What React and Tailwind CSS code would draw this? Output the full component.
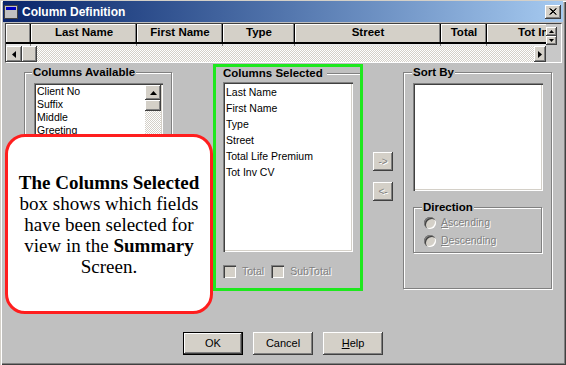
const ui = "font-['Liberation_Sans',Arial,sans-serif]";
const raised =
  "bg-[#d4d0c8] shadow-[inset_-1px_-1px_0_#404040,inset_1px_1px_0_#ffffff,inset_-2px_-2px_0_#808080]";
const sunken =
  "bg-white shadow-[inset_1px_1px_0_#808080,inset_2px_2px_0_#404040,inset_-1px_-1px_0_#ffffff,inset_-2px_-2px_0_#d4d0c8]";
const etched = "border border-[#808080] shadow-[inset_1px_1px_0_#ffffff,1px_1px_0_#ffffff]";
const disabled = "text-[#808080] [text-shadow:1px_1px_0_#ffffff]";
const dither =
  "bg-[repeating-conic-gradient(#ffffff_0_25%,#d4d0c8_0_50%)] bg-[length:2px_2px]";

const Tri = ({ dir, w = 7, h = 4 }) => {
  const pts = {
    up: `0,${h} ${w / 2},0 ${w},${h}`,
    down: `0,0 ${w / 2},${h} ${w},0`,
    left: `${w},0 0,${h / 2} ${w},${h}`,
    right: `0,0 ${w},${h / 2} 0,${h}`,
  };
  return (
    <svg width={w} height={h} viewBox={`0 0 ${w} ${h}`}>
      <polygon points={pts[dir]} fill="#000" />
    </svg>
  );
};

const columns = [
  { label: '', w: 25 },
  { label: 'Last Name', w: 106 },
  { label: 'First Name', w: 86 },
  { label: 'Type', w: 72 },
  { label: 'Street', w: 146 },
  { label: 'Total', w: 46 },
  { label: 'Tot Inv CV', w: 118 },
];

const available = ['Client No', 'Suffix', 'Middle', 'Greeting', 'Salutation', 'Address'];
const selected = ['Last Name', 'First Name', 'Type', 'Street', 'Total Life Premium', 'Tot Inv CV'];

const Legend = ({ children, ml }) => (
  <legend className={`${ml} px-[1px] text-[11.5px] font-bold leading-[14px] text-black`}>
    {children}
  </legend>
);

const Check = ({ label }) => (
  <div className="flex items-center">
    <div className="w-[13px] h-[13px] bg-[#d4d0c8] shadow-[inset_1px_1px_0_#808080,inset_2px_2px_0_#404040,inset_-1px_-1px_0_#ffffff]" />
    <span className={`ml-[6px] text-[10.5px] ${disabled}`}>{label}</span>
  </div>
);

const Radio = ({ label }) => (
  <div className="flex items-center h-[18px]">
    <div className="w-[12px] h-[12px] rounded-full bg-[#d4d0c8] shadow-[inset_1px_1px_0_#808080,inset_2px_2px_0_#404040,inset_-1px_-1px_0_#ffffff]" />
    <span className={`ml-[5px] text-[10.5px] ${disabled}`}>
      <span className="underline">{label[0] === 'A' ? 'A' : 'D'}</span>
      {label.slice(1)}
    </span>
  </div>
);

const Button = ({ children, isDefault }) => (
  <div
    className={`w-[60px] h-[23px] flex items-center justify-center text-[11px] text-black ${raised} ${
      isDefault ? 'outline outline-1 outline-black -outline-offset-1 shadow-[inset_-2px_-2px_0_#404040,inset_2px_2px_0_#ffffff,inset_-3px_-3px_0_#808080]' : ''
    }`}
  >
    {children}
  </div>
);

export default function App() {
  return (
    <div
      className={`${ui} relative w-[566px] h-[365px] overflow-hidden bg-[#c0c0c0] shadow-[inset_1px_1px_0_#d4d0c8,inset_2px_2px_0_#ffffff,inset_-1px_-1px_0_#404040,inset_-2px_-2px_0_#808080]`}
    >
      {/* title bar */}
      <div className="mx-[3px] mt-[1px] h-[21px] flex items-center bg-gradient-to-r from-[#0a246a] to-[#a6caf0]">
        <div className="ml-[1px] w-[14px] h-[14px] border border-[#404040] bg-[#c0c0c0] flex flex-col">
          <div className="h-[3px] mx-[1px] mt-[1px] bg-[#0000c0]" />
        </div>
        <span className="ml-[4px] text-[12px] font-bold text-white">Column Definition</span>
        <div className={`ml-auto mr-[2px] w-[16px] h-[14px] flex items-center justify-center ${raised}`}>
          <svg width="8" height="7" viewBox="0 0 8 7">
            <path d="M0.5 0.5 L7 6.5 M1.5 0.5 L7.5 6.5 M7 0.5 L0.5 6.5 M7.5 0.5 L1.5 6.5" stroke="#000" strokeWidth="1" />
          </svg>
        </div>
      </div>

      {/* grid */}
      <div className="ml-[5px] mt-[1px] w-[557px] h-[40px] border border-t-[#404040] border-l-[#404040] border-r-white border-b-white flex">
        <div className="w-[540px] flex flex-col">
          <div className="h-[18px] flex overflow-hidden">
            {columns.map((c, i) => (
              <div
                key={i}
                style={{ width: c.w }}
                className="shrink-0 h-full flex items-center justify-center bg-[#d4d0c8] text-[11.5px] font-bold text-black whitespace-nowrap shadow-[inset_-1px_0_0_#000000,inset_-2px_0_0_#808080,inset_1px_1px_0_#ffffff]"
              >
                {c.label}
              </div>
            ))}
          </div>
          <div className="h-[2px] bg-black" />
          <div className="h-[2px] flex overflow-hidden bg-[#e8e8e8]">
            {columns.map((c, i) => (
              <div key={i} style={{ width: c.w }} className="shrink-0 h-full border-r border-[#808080]" />
            ))}
          </div>
          <div className="h-[16px] flex">
            <div className={`w-[16px] h-full flex items-center justify-center ${raised}`}>
              <Tri dir="left" w={4} h={7} />
            </div>
            <div className={`w-[15px] h-full ${raised}`} />
            <div className={`flex-1 h-full ${dither}`} />
            <div className={`w-[12px] h-full flex items-center justify-center ${raised}`}>
              <Tri dir="right" w={4} h={7} />
            </div>
          </div>
        </div>
        <div className="flex-1 bg-[#c8c8c8] pt-[3px]">
          <div className={`w-[11px] h-[9px] flex items-center justify-center ${raised}`}>
            <Tri dir="up" w={5} h={3} />
          </div>
          <div className={`w-[11px] h-[9px] flex items-center justify-center ${raised}`}>
            <Tri dir="down" w={5} h={3} />
          </div>
        </div>
      </div>

      {/* body */}
      <div className="h-[228px] flex items-start text-black">
        <fieldset className={`ml-[24px] mt-[2px] w-[148px] h-[224px] ${etched}`}>
          <Legend ml="ml-[7px] bg-[#c0c0c0]">Columns Available</Legend>
          <div className={`ml-[9px] mt-[4px] w-[129px] h-[190px] p-[2px] flex ${sunken}`}>
            <div className="flex-1 pl-[1px] text-[10.5px] leading-[13px]">
              {available.map((a) => (
                <div key={a}>{a}</div>
              ))}
            </div>
            <div className="w-[16px] flex flex-col">
              <div className={`h-[15px] flex items-center justify-center ${raised}`}>
                <Tri dir="up" />
              </div>
              <div className={`h-[11px] ${raised}`} />
              <div className={`flex-1 ${dither}`} />
            </div>
          </div>
        </fieldset>

        <div className="ml-[41px] mt-[1px] w-[150px] h-[227px] border-[3px] border-[#1ee81e] flex flex-col">
          <div className="h-[13px] flex items-center pl-[6px]">
            <span className="px-[1px] text-[11.5px] font-bold leading-[13px]">Columns Selected</span>
            <div className="ml-[3px] flex-1 h-[2px] border-t border-[#808080] border-b border-b-white" />
          </div>
          <div className={`ml-[7px] mt-[2px] w-[130px] h-[170px] px-[3px] pt-[2px] text-[10.5px] leading-[16px] ${sunken}`}>
            {selected.map((s) => (
              <div key={s}>{s}</div>
            ))}
          </div>
          <div className="ml-[7px] mt-[12px] flex gap-[7px]">
            <Check label="Total" />
            <Check label="SubTotal" />
          </div>
        </div>

        <div className="ml-[10px] mt-[89px] flex flex-col gap-[11px]">
          <div className={`w-[20px] h-[19px] flex items-center justify-center text-[10px] ${raised} ${disabled}`}>-&gt;</div>
          <div className={`w-[20px] h-[19px] flex items-center justify-center text-[10px] ${raised} ${disabled}`}>&lt;-</div>
        </div>

        <fieldset className={`ml-[10px] mt-[2px] w-[149px] h-[224px] ${etched}`}>
          <Legend ml="ml-[8px] bg-[#c0c0c0]">Sort By</Legend>
          <div className={`ml-[9px] mt-[4px] w-[130px] h-[108px] ${sunken}`} />
          <fieldset className={`ml-[9px] mt-[9px] w-[129px] h-[53px] ${etched}`}>
            <Legend ml="ml-[8px] bg-[#c0c0c0]">Direction</Legend>
            <div className="pl-[10px] mt-[0px]">
              <Radio label="Ascending" />
              <Radio label="Descending" />
            </div>
          </fieldset>
        </fieldset>
      </div>

      {/* buttons */}
      <div className="mt-[41px] pl-[183px] flex gap-[10px]">
        <Button isDefault>OK</Button>
        <Button>Cancel</Button>
        <Button>
          <span>
            <span className="underline">H</span>elp
          </span>
        </Button>
      </div>

      {/* callout */}
      <div className="absolute left-[5px] top-[134px] w-[208px] h-[180px] rounded-[20px] border-[3px] border-[#ff1e1e] bg-white flex items-center justify-center text-center font-['Liberation_Serif','Times_New_Roman',serif] text-[19px] leading-[21px] text-black">
        <p>
          <b>The Columns Selected</b>
          <br />
          box shows which fields
          <br />
          have been selected for
          <br />
          view in the <b>Summary</b>
          <br />
          Screen.
        </p>
      </div>
    </div>
  );
}
